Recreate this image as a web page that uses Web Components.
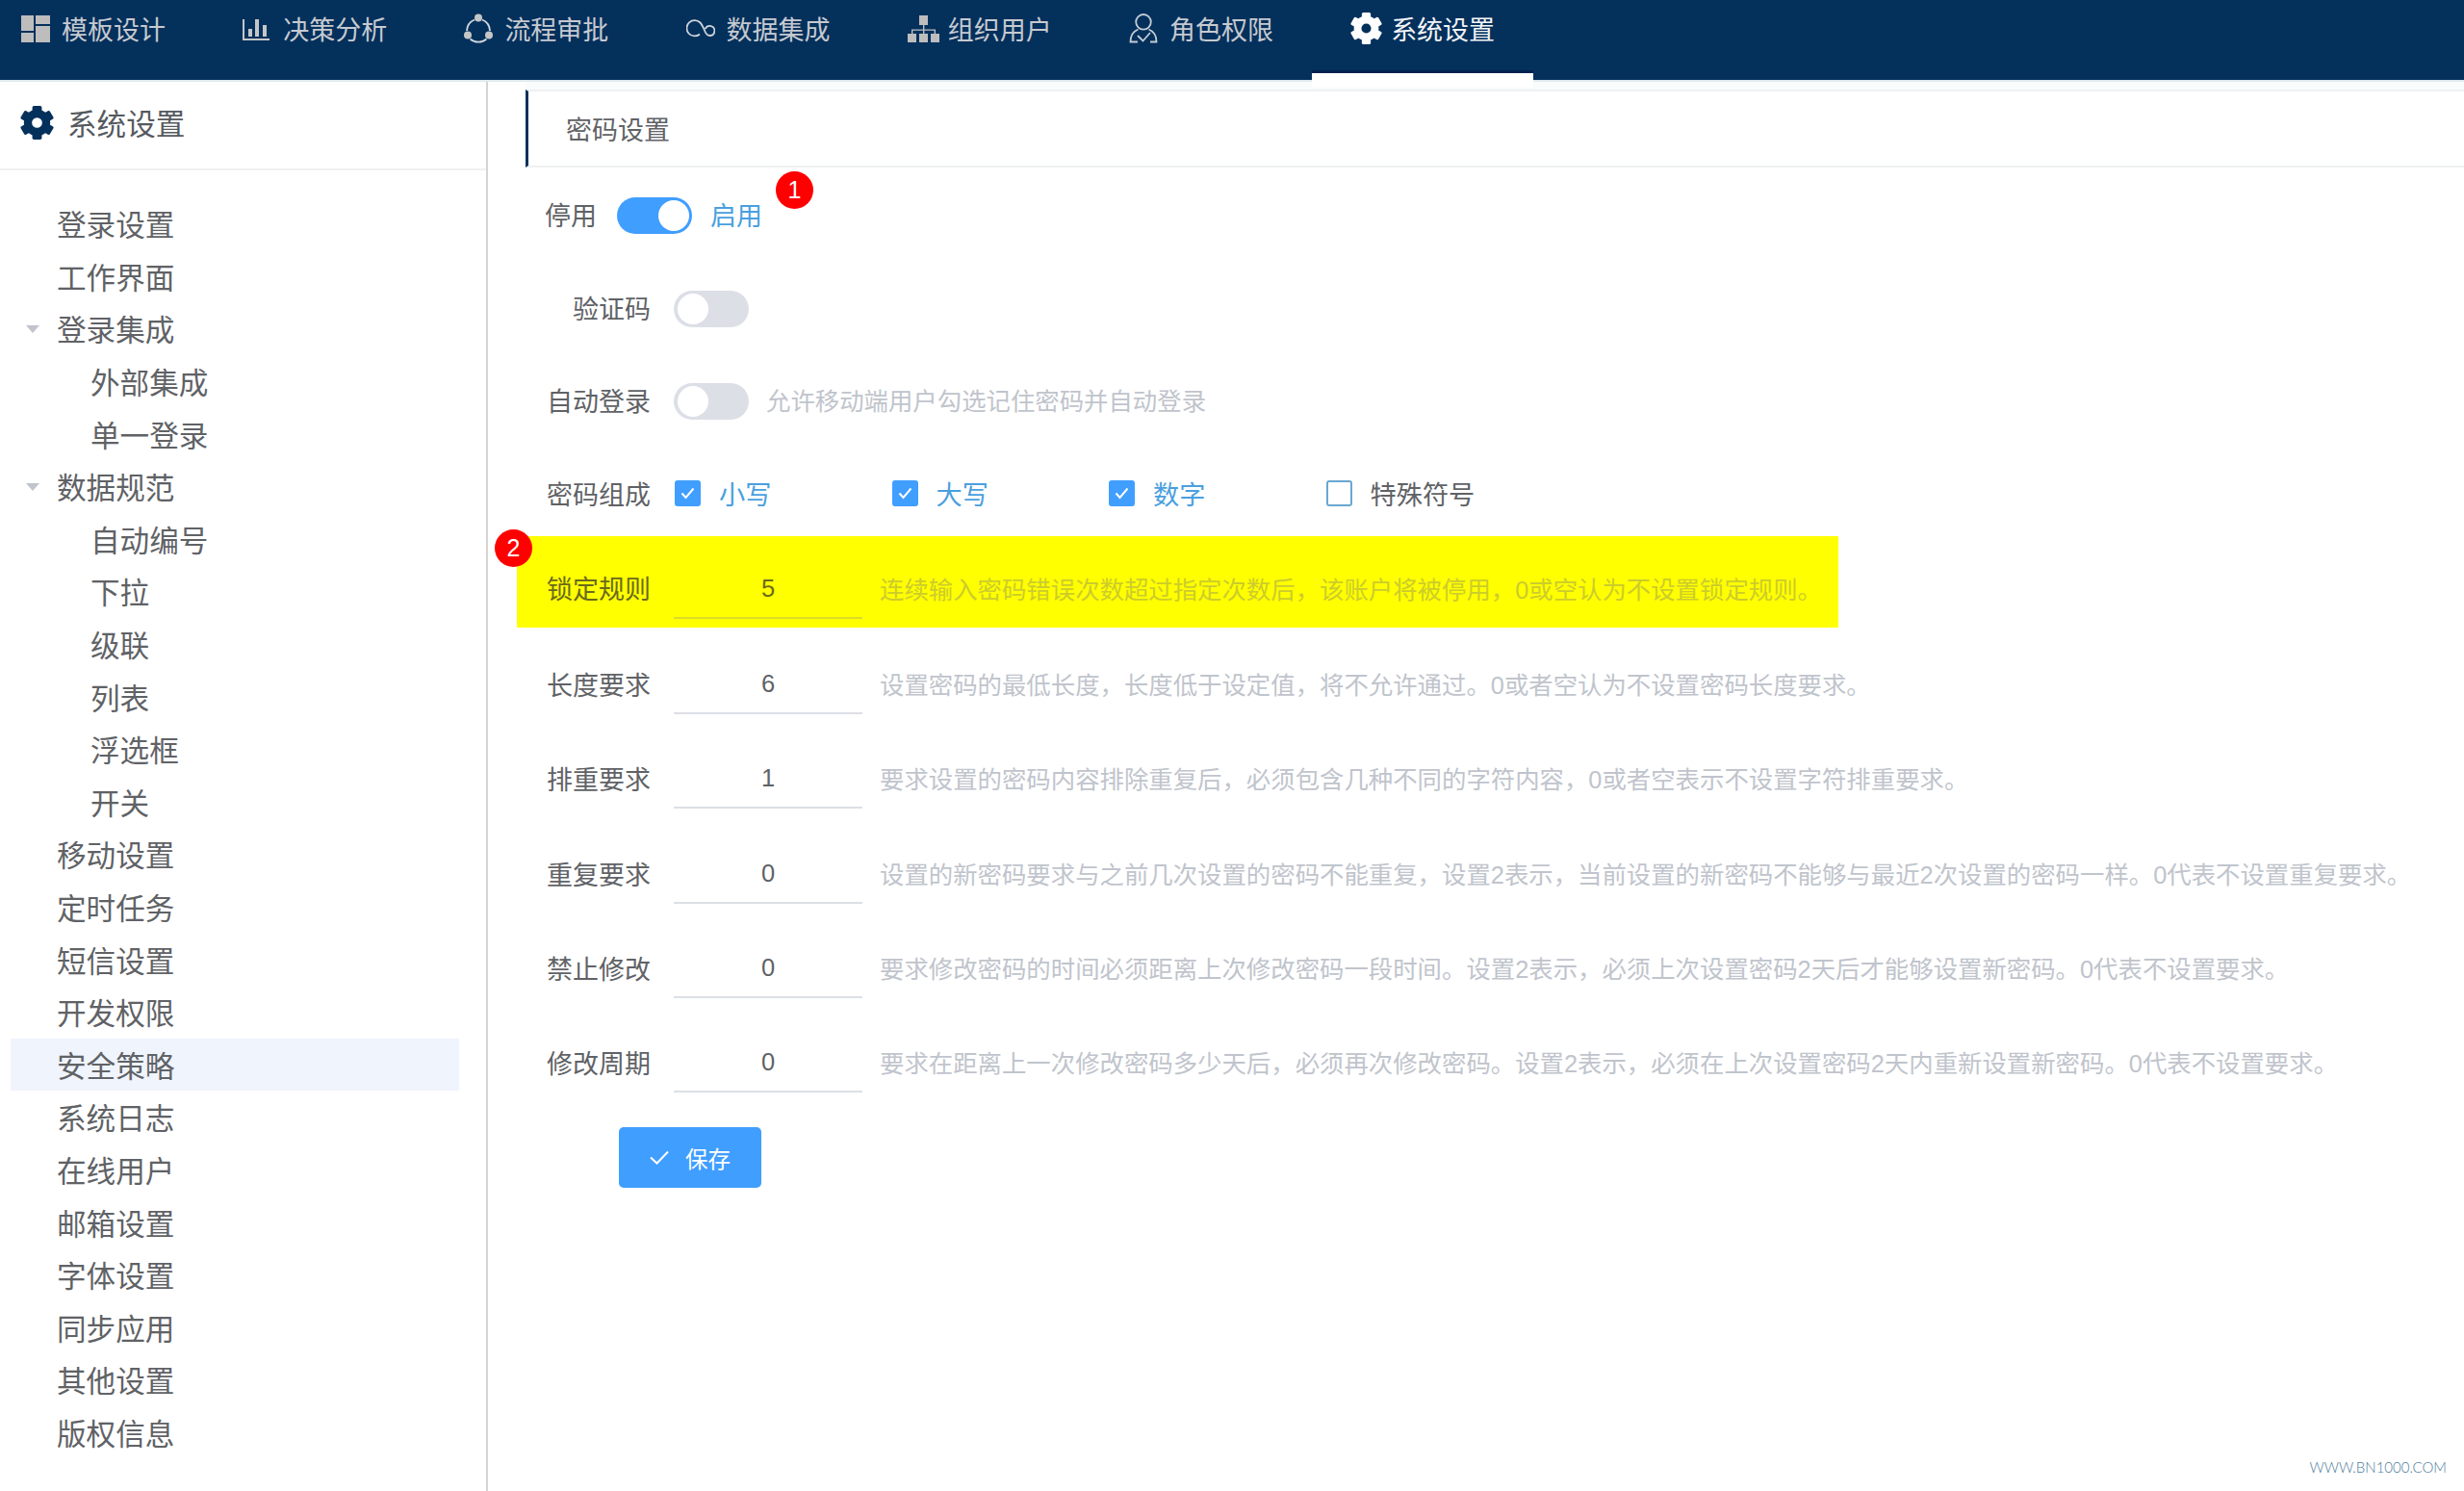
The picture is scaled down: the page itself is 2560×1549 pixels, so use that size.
<!DOCTYPE html>
<html lang="zh"><head><meta charset="utf-8"><title>系统设置</title>
<style>
html,body{margin:0;padding:0;height:1549px;overflow:hidden;background:#fff;font-family:"Liberation Sans","Noto Sans CJK SC",sans-serif;color:#606266}
</style></head><body>
<x-app>
  <x-topbar slot="top">
    <x-tab icon="tpl">模板设计</x-tab>
    <x-tab icon="bars">决策分析</x-tab>
    <x-tab icon="flow">流程审批</x-tab>
    <x-tab icon="link">数据集成</x-tab>
    <x-tab icon="org">组织用户</x-tab>
    <x-tab icon="user">角色权限</x-tab>
    <x-tab icon="gear" active>系统设置</x-tab>
  </x-topbar>
  <x-sidebar slot="side" heading="系统设置">
    <x-node>登录设置</x-node><x-node>工作界面</x-node><x-node open>登录集成</x-node>
    <x-node child>外部集成</x-node><x-node child>单一登录</x-node><x-node open>数据规范</x-node>
    <x-node child>自动编号</x-node><x-node child>下拉</x-node><x-node child>级联</x-node>
    <x-node child>列表</x-node><x-node child>浮选框</x-node><x-node child>开关</x-node>
    <x-node>移动设置</x-node><x-node>定时任务</x-node><x-node>短信设置</x-node><x-node>开发权限</x-node>
    <x-node selected>安全策略</x-node><x-node>系统日志</x-node><x-node>在线用户</x-node><x-node>邮箱设置</x-node>
    <x-node>字体设置</x-node><x-node>同步应用</x-node><x-node>其他设置</x-node><x-node>版权信息</x-node>
  </x-sidebar>
  <x-panel slot="main" heading="密码设置">
    <x-row label="停用" plain style="margin-top:-1px">
      <x-switch on></x-switch><x-on-label>启用</x-on-label><x-badge style="left:269px;top:5px">1</x-badge>
    </x-row>
    <x-row label="验证码" style="margin-top:-1px"><x-switch></x-switch></x-row>
    <x-row label="自动登录" style="margin-top:-2px"><x-switch></x-switch><x-hint>允许移动端用户勾选记住密码并自动登录</x-hint></x-row>
    <x-row label="密码组成" style="margin-top:-1px">
      <x-check checked>小写</x-check><x-check checked>大写</x-check><x-check checked>数字</x-check><x-check>特殊符号</x-check>
    </x-row>
    <x-row label="锁定规则" mark>
      <x-badge style="left:-23px;top:-7px">2</x-badge>
      <x-num>5</x-num><x-hint>连续输入密码错误次数超过指定次数后，该账户将被停用，0或空认为不设置锁定规则。</x-hint>
    </x-row>
    <x-row label="长度要求"><x-num>6</x-num><x-hint>设置密码的最低长度，长度低于设定值，将不允许通过。0或者空认为不设置密码长度要求。</x-hint></x-row>
    <x-row label="排重要求"><x-num>1</x-num><x-hint>要求设置的密码内容排除重复后，必须包含几种不同的字符内容，0或者空表示不设置字符排重要求。</x-hint></x-row>
    <x-row label="重复要求" style="margin-top:1px"><x-num>0</x-num><x-hint>设置的新密码要求与之前几次设置的密码不能重复，设置2表示，当前设置的新密码不能够与最近2次设置的密码一样。0代表不设置重复要求。</x-hint></x-row>
    <x-row label="禁止修改"><x-num>0</x-num><x-hint>要求修改密码的时间必须距离上次修改密码一段时间。设置2表示，必须上次设置密码2天后才能够设置新密码。0代表不设置要求。</x-hint></x-row>
    <x-row label="修改周期"><x-num>0</x-num><x-hint>要求在距离上一次修改密码多少天后，必须再次修改密码。设置2表示，必须在上次设置密码2天内重新设置新密码。0代表不设置要求。</x-hint></x-row>
    <x-save>保存</x-save>
  </x-panel>
  <x-mark slot="mark">WWW.BN1000.COM</x-mark>
</x-app>
<script>
const gear=(s,c)=>{let t='';for(let a=0;a<360;a+=60)t+=`<rect x="-4.500" y="-16" width="9" height="8" rx="1.500" transform="rotate(${a})"/>`;
 return `<svg width="${s}" height="${s}" viewBox="-16 -16 32 32" fill="${c}" aria-hidden="true"><circle r="8.700" fill="none" stroke="${c}" stroke-width="7.600"/>${t}</svg>`};
const ICONS={
 tpl:`<svg width="30" height="28" viewBox="0 0 30 28" fill="#bdbdbd"><rect width="13" height="16"/><rect y="18" width="13" height="10"/><rect x="15" width="15" height="9"/><rect x="15" y="11" width="15" height="17"/></svg>`,
 bars:`<svg width="28" height="24" viewBox="0 0 28 24" fill="#c4c6c8"><path d="M0 2h2v20h26v2H0z"/><rect x="6" y="12" width="4" height="8"/><rect x="13" y="2" width="4" height="18"/><rect x="21" y="8" width="4" height="12"/></svg>`,
 flow:`<svg width="30" height="31" viewBox="0 0 30 31" fill="#c4c6c8"><g fill="none" stroke="#cfd6dc" stroke-width="1.800"><path d="M11 6.500A13 13 0 0 0 3 18"/><path d="M19 6.500A13 13 0 0 1 27 18"/><path d="M6.500 26.500A13 13 0 0 0 23.500 26.500"/></g><circle cx="15" cy="4.500" r="4"/><circle cx="4" cy="22.500" r="4"/><circle cx="26" cy="22.500" r="4"/></svg>`,
 link:`<svg width="30" height="19" viewBox="0 0 30 19" fill="none" stroke="#cdd3d8" stroke-width="1.800"><path d="M14 15.500A8.200 8.200 0 1 1 14.500 3.500C16.500 5.500 17.500 8.500 19 11.500C20 14.500 22 17 24.500 17A5 5 0 1 0 19.800 10"/></svg>`,
 org:`<svg width="33" height="28" viewBox="0 0 33 28" fill="#bdbdbd"><rect x="12" width="9" height="10"/><rect x="0" y="19" width="9" height="9"/><rect x="12" y="19" width="9" height="9"/><rect x="24" y="19" width="9" height="9"/><path d="M16 10h1.400v4.400H29v5h-1.400v-3.600H17.400v3.200H16v-3.200H5.400v3.600H4v-5h12z"/></svg>`,
 user:`<svg width="30" height="31" viewBox="0 0 30 31" fill="none" stroke="#c4ccd2" stroke-width="1.800"><ellipse cx="15" cy="8.800" rx="7.800" ry="7.800"/><path d="M9.500 16.500C4.500 18.500 1.500 23 1.500 29.500H9M20.500 16.500C25.500 18.500 28.500 23 28.500 29.500H22"/><path d="M9 23l5.500 5.500L22 20"/></svg>`,
 gear:gear(33,'#fff')
};
const def=(n,css,html,extra={})=>{
 const T=document.createElement('template');T.innerHTML=`<style>${css}</style>${html}`;
 customElements.define(n,class extends HTMLElement{constructor(){super();this.attachShadow({mode:'open'}).appendChild(T.content.cloneNode(true));}
  connectedCallback(){extra.init&&extra.init.call(this,this.shadowRoot)}});
};
def('x-app',`:host{display:flex;flex-direction:column;width:2560px;height:1549px;position:relative;overflow:hidden}
 .b{display:flex;flex:1;min-height:0}`,`<slot name="top"></slot><div class="b"><slot name="side"></slot><slot name="main"></slot></div><slot name="mark"></slot>`);
def('x-topbar',`:host{display:flex;height:83px;background:#04305c;padding-left:22px;flex:none;box-shadow:0 2px 0 #dfe9ee;position:relative;z-index:2;box-sizing:border-box}`,`<slot></slot>`);
def('x-tab',`:host{display:flex;flex:none;width:230.200px;height:59px;align-items:center;font-size:27px;color:#c6cad0;position:relative}
 .i{width:42px;flex:none;display:flex;align-items:center;justify-content:flex-start;height:31px}
 :host([active]){color:#f2f4f6}
 :host([active])::after{content:"";position:absolute;left:-40px;width:230px;top:73px;height:18px;background:#fff;border-top:3px solid #03214f;box-sizing:border-box}`,
 `<span class="i"></span><span><slot></slot></span>`,{init(r){r.querySelector('.i').innerHTML=ICONS[this.getAttribute('icon')]}});
def('x-sidebar',`:host{display:block;width:507px;flex:none;box-sizing:border-box;border-right:2px solid #d4d4d4;background:#fff}
 .h{display:flex;align-items:center;height:94px;box-sizing:border-box;padding:0 0 4px 21px;border-bottom:2px solid #f0f0f0;font-size:30.600px;color:#555a60;gap:14px}
 .t{padding:28px 0 0 11px;width:466px}`,`<div class="h"><span class="g"></span><span class="ht"></span></div><div class="t"><slot></slot></div>`,
 {init(r){r.querySelector('.g').innerHTML=gear(35,'#04305c');r.querySelector('.g').style.cssText='display:flex';r.querySelector('.ht').textContent=this.getAttribute('heading')}});
def('x-node',`:host{display:flex;align-items:center;height:54.600px;font-size:30.600px;color:#606266;padding-left:16px;box-sizing:border-box}
 .a{width:32px;flex:none;display:flex;margin-top:2px}.a svg{visibility:hidden}
 :host([open]) .a svg{visibility:visible}
 :host([child]) .a{width:67px}
 :host([selected]){background:#eff4fd}`,`<span class="a"><svg width="14" height="8" viewBox="0 0 14 8"><path d="M0 0h14L7 8z" fill="#c0c4cc"/></svg></span><span><slot></slot></span>`);
def('x-panel',`:host{display:block;flex:1;min-width:0;padding:10px 0 0 30px;position:relative}
 .c{margin-left:9px;height:81px;box-sizing:border-box;border-left:3px solid #04305c;border-top:2px solid #eef0f1;border-bottom:2px solid #eef0f1;box-shadow:0 -10px 0 #f9fbfc;display:flex;align-items:center;padding-left:39px;font-size:27px;color:#606266}`,
 `<div class="c"></div><slot></slot>`,{init(r){r.querySelector('.c').textContent=this.getAttribute('heading')}});
def('x-row',`:host{display:flex;align-items:center;height:98px;position:relative;--c:#606266;--h:#c0c4cc;--u:#dcdfe6;color:var(--c)}
 .l{width:139px;text-align:right;font-size:27px;margin-right:24px;flex:none}
 :host([plain]) .l{width:auto;margin:0 21px 0 29px}
 :host([mark]){width:1373px;height:95px;padding-top:12px;box-sizing:border-box;background:#ff0;margin-top:-4px;margin-bottom:9px;--c:#6a6a1c;--h:#cccc2c;--u:#dcdc24}`,
 `<span class="l"></span><slot></slot>`,{init(r){r.querySelector('.l').textContent=this.getAttribute('label')}});
def('x-switch',`:host{display:block;width:78px;height:38px;margin-top:3px;border-radius:19px;background:#dcdfe6;position:relative;flex:none}
 i{position:absolute;left:4px;top:3px;width:32px;height:32px;border-radius:50%;background:#fff}
 :host([on]){background:#409eff}:host([on]) i{left:43px}`,`<i></i>`);
def('x-on-label',`:host{display:block;font-size:27px;color:#4a9fdf;margin-left:19px}`,`<slot></slot>`);
def('x-hint',`:host{display:block;font-size:25.400px;color:var(--h);margin-left:18px;white-space:nowrap}`,`<slot></slot>`);
def('x-num',`:host{display:flex;align-items:center;justify-content:center;width:196px;height:64px;box-sizing:border-box;padding-top:3px;border-bottom:2px solid var(--u);font-size:25.500px;color:var(--c);flex:none}`,`<slot></slot>`);
def('x-check',`:host{display:flex;align-items:center;width:225.500px;font-size:27.200px;color:#4a9fdf;flex:none;margin-left:1px;margin-right:-1px}
 .b{width:27px;height:27px;box-sizing:border-box;border-radius:3px;border:2px solid #6ba7d0;background:#fff;margin-right:19px;display:flex;align-items:center;justify-content:center}
 .b svg{display:none}
 :host([checked]) .b{background:#409eff;border-color:#409eff}:host([checked]) .b svg{display:block}
 :host(:not([checked])){color:#606266}`,
 `<span class="b"><svg width="15" height="13" viewBox="0 0 15 13" fill="none" stroke="#fff" stroke-width="2"><path d="M1.500 6.500l4 4.500L13.500 1.500"/></svg></span><span><slot></slot></span>`);
def('x-badge',`:host{position:absolute;display:flex;align-items:center;justify-content:center;width:39px;height:39px;border-radius:50%;background:#f00;color:#fff;font-size:25px;z-index:3}`,`<slot></slot>`);
def('x-save',`:host{display:flex;align-items:center;width:148px;height:63px;box-sizing:border-box;margin:19px 0 0 106px;padding-left:32px;background:#409eff;border-radius:5px;color:#fff;font-size:23.500px}
 svg{margin-right:17px}`,`<svg width="20" height="15" viewBox="0 0 20 15" fill="none" stroke="#fff" stroke-width="2"><path d="M1 7.500L7.500 13.500 19 1.500"/></svg><span><slot></slot></span>`);
def('x-mark',`:host{position:absolute;right:18px;bottom:16px;font:300 15px/18px Lato,sans-serif;color:#4f7d9c}`,`<slot></slot>`);
</script>
</body></html>
